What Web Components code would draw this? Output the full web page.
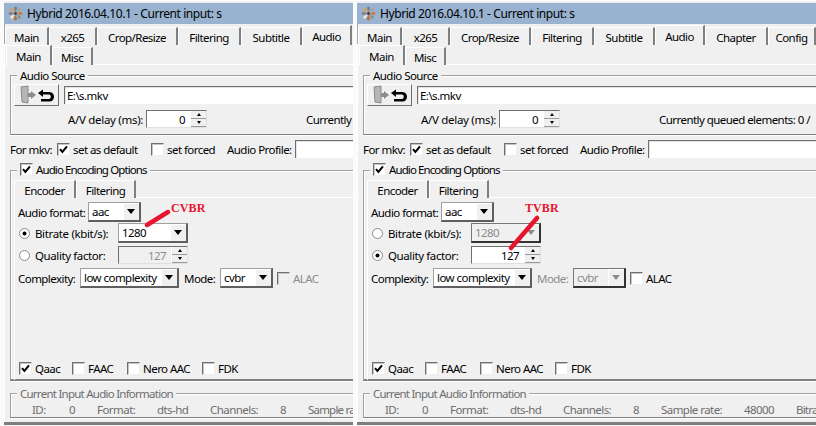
<!DOCTYPE html>
<html>
<head>
<meta charset="utf-8">
<title>Hybrid</title>
<style>
html,body{margin:0;padding:0;height:426px;overflow:hidden;background:#fbfbfb}
body{display:flex;gap:4px;padding-left:4px;position:relative;font:11.5px/15px "Noto Sans",sans-serif;letter-spacing:-.55px;color:#000}
</style>
</head>
<body>

<hy-window name="Hybrid 2016.04.10.1 - Current input: s" style="width:349px">
  <hy-tabs slot="tabs" style="padding-left:1px">
    <hy-tab style="width:44px">Main</hy-tab><hy-tab style="width:48px">x265</hy-tab><hy-tab style="width:81px">Crop/Resize</hy-tab><hy-tab style="width:63px">Filtering</hy-tab><hy-tab style="width:61px">Subtitle</hy-tab><hy-tab selected style="width:50px">Audio</hy-tab>
  </hy-tabs>
  <hy-audio-page mode="cvbr"></hy-audio-page>
</hy-window>

<hy-window name="Hybrid 2016.04.10.1 - Current input: s" style="width:459px">
  <hy-tabs slot="tabs" style="padding-left:1px">
    <hy-tab style="width:44px">Main</hy-tab><hy-tab style="width:48px">x265</hy-tab><hy-tab style="width:81px">Crop/Resize</hy-tab><hy-tab style="width:63px">Filtering</hy-tab><hy-tab style="width:61px">Subtitle</hy-tab><hy-tab selected style="width:50px">Audio</hy-tab><hy-tab style="width:63px">Chapter</hy-tab><hy-tab style="width:48px">Config</hy-tab>
  </hy-tabs>
  <hy-audio-page mode="tvbr"></hy-audio-page>
</hy-window>

<hy-note text="CVBR" tx="171" ty="201" x1="147" y1="225" x2="168" y2="212"></hy-note>
<hy-note text="TVBR" tx="525" ty="201" x1="511" y1="248" x2="537" y2="218"></hy-note>

<script>
// small helper, every widget is just a shadow root with some markup
function widget(tag, css, render){
  class W extends HTMLElement{
    constructor(){
      super();
      this.attachShadow({mode:'open'});
    }
    connectedCallback(){
      this.shadowRoot.innerHTML = '<style>' + css + '</style>' + render(this);
    }
  }
  customElements.define(tag, W);
}

const pinwheel = [0,45,90,135,180,225,270,315].map((a,i) =>
  `<path d="M7.5 6.5 6 2.2C6 .2 9 .2 9 2.2Z" fill="${['#7f7f7f','#a3a3a3','#d9752a','#8a8a8a','#c9681f','#efe9e0','#7f7f7f','#e39a45'][i]}" transform="rotate(${a} 7.5 7.5)"/>`
).join('') + '<circle cx="7.5" cy="7.5" r="1.4" fill="#4a4038"/>';

widget('hy-window', `
  :host{display:block;flex:none;height:426px;overflow:hidden;padding-top:3px;box-sizing:border-box;background:#f0f0f0;box-shadow:inset 0 1px #fff}
  .title{display:flex;align-items:center;height:21px;background:#98b2d0;padding-left:4px;gap:4px;font-size:12px;letter-spacing:-.42px}
  .title svg{flex:none}
  .body{width:800px;padding-top:1px;box-shadow:inset 1px 0 #a5a5a5}
`, el => `
  <div class="title">
    <svg width="15" height="15" viewBox="0 0 15 15">${pinwheel}</svg>
    <span>${el.getAttribute('name')}</span>
  </div>
  <div class="body"><slot name="tabs"></slot><slot></slot></div>
`);

widget('hy-tabs', `
  :host{display:flex;align-items:flex-end;height:20px;box-sizing:border-box;border-bottom:1px solid #fff}
  ::slotted(hy-tab){margin-bottom:-1px}
`, () => '<slot></slot>');

widget('hy-tab', `
  :host{display:flex;flex:none;align-items:center;justify-content:center;height:18px;box-sizing:border-box;background:#f0f0f0;
    border-top:1px solid #fff;border-left:1px solid #fff;border-right:2px solid #7f7f7f;padding-top:1px}
  :host([selected]){height:calc(100% + 1px);position:relative}
`, () => '<slot></slot>');

widget('hy-group', `
  :host{display:block;box-sizing:border-box;border:1px solid #a0a0a0;border-bottom-color:#808080;box-shadow:inset 1px 1px #fff,0 1px #fff}
  .legend{display:inline-flex;align-items:center;height:15px;margin:-8px 0 0 6px;padding:0 3px;background:#f0f0f0;vertical-align:top}
`, () => `<div style="height:0"><div class="legend"><slot name="legend"></slot></div></div><div><slot></slot></div>`);

widget('hy-row', `:host{display:flex;align-items:center;white-space:nowrap}`, () => '<slot></slot>');

widget('hy-check', `
  :host{display:inline-flex;align-items:center;flex:none;gap:3px}
  .box{width:13px;height:13px;box-sizing:border-box;background:#fff;border:1px solid;border-color:#6f6f6f #eee #eee #6f6f6f;box-shadow:inset 1px 1px #c4c4c4;display:block;flex:none}
  :host([disabled]) .box{background:#f0f0f0}
`, el => `
  <svg class="box" viewBox="0 0 11 11">${el.hasAttribute('checked') ? '<path d="M2 5.2 4.4 8 9 2.4" fill="none" stroke="#000" stroke-width="2"/>' : ''}</svg>
  <span><slot></slot></span>
`);

widget('hy-radio', `
  :host{display:inline-flex;align-items:center;flex:none;gap:5px}
  svg{flex:none;display:block}
`, el => `
  <svg width="11" height="11" viewBox="0 0 11 11">
    <circle cx="5.5" cy="5.5" r="5" fill="#fff" stroke="#8a8a8a"/>
    ${el.hasAttribute('checked') ? '<circle cx="5.5" cy="5.5" r="2" fill="#000"/>' : ''}
  </svg>
  <span><slot></slot></span>
`);

widget('hy-combo', `
  :host{display:flex;flex:none;box-sizing:border-box;height:20px;background:#fff;border:1px solid;border-color:#a0a0a0 #5f5f5f #5f5f5f #a0a0a0;border-width:1px 2px 2px 1px;align-items:center}
  :host([disabled]){background:#f0f0f0;color:#8c8c8c;border-color:#777 #333 #333 #777}
  .val{flex:1;padding-left:3px;overflow:hidden}
  .arrow{flex:none;width:16px;align-self:stretch;background:#f0f0f0;display:flex;align-items:center;justify-content:center;box-shadow:inset 1px 1px #fff}
  .arrow i{width:0;height:0;border:4px solid transparent;border-top:5px solid #000;border-bottom:0}
  :host([disabled]) .arrow i{border-top-color:#8c8c8c}
`, () => `<span class="val"><slot></slot></span><span class="arrow"><i></i></span>`);

widget('hy-spin', `
  :host{display:flex;flex:none;box-sizing:border-box;height:18px;background:#fff;border:1px solid;border-color:#6f6f6f #e0e0e0 #e0e0e0 #6f6f6f;align-items:center}
  :host([disabled]){background:#f0f0f0;color:#8c8c8c}
  .val{flex:1;text-align:right;padding-right:5px}
  .btn{flex:none;width:15px;align-self:stretch;display:flex;flex-direction:column;background:#f0f0f0;border-left:1px solid #fff}
  .btn span{flex:1;display:flex;align-items:center;justify-content:center;border-bottom:1px solid #9a9a9a}
  .btn i{width:0;height:0;border:2px solid transparent;border-bottom:3px solid #000;border-top:0}
  .btn span+span i{border-top:3px solid #000;border-bottom:0}
`, () => `<span class="val"><slot></slot></span><span class="btn"><span><i></i></span><span><i></i></span></span>`);

widget('hy-source-button', `
  :host{display:block;flex:none;width:45px;height:22px;box-sizing:border-box;background:#f0f0f0;border:1px solid;border-color:#fff #6f6f6f #6f6f6f #fff}
  svg{display:block}
`, () => `
  <svg width="43" height="20" viewBox="0 0 43 20">
    <path d="M6 2 13 1V18L7 17Z" fill="#b5b5b5" stroke="#8c8c8c"/>
    <path d="M13 8h3V6l5 4-5 4v-2h-3Z" fill="#8c8c8c"/>
    <path d="M28 4.5 23 8l5 4V9.6h6c2.4 0 2.4 4.4 0 4.4h-8v2.6h8.5c6 0 6-9.6 0-9.6H28V4Z" fill="#000"/>
  </svg>
`);

widget('hy-input', `
  :host{display:flex;align-items:center;box-sizing:border-box;height:18px;background:#fff;border-top:1px solid #6f6f6f;border-left:1px solid #6f6f6f;padding-left:2px;box-shadow:inset 1px 1px #e4e4e4}
`, () => '<slot></slot>');

widget('hy-audio-page', `
  :host{display:block;padding-left:1px;box-shadow:inset 1px 0 #fff}
  .off{color:#8c8c8c}
  .page{padding-left:5px}
  .info{height:25px;margin-top:12px;color:#6d6d6d}
  .frame{height:3px;margin-top:4px;background:#7f7f7f;margin-left:-1px}
  .panel{box-shadow:inset 1px 0 #fff;padding-top:4px;height:178px}
`, el => {
  const tv = el.getAttribute('mode') === 'tvbr';
  // the left window is narrower, it only shows the start of the long rows
  const rest = tv ? `<span style="width:83px">Sample rate:</span><span style="width:52px">48000</span><span style="letter-spacing:-.8px">Bitra</span>` : `<span style="letter-spacing:-.8px">Sample ra</span>`;
  return `
  <hy-tabs style="padding-left:1px">
    <hy-tab selected style="width:46px">Main</hy-tab><hy-tab style="width:41px">Misc</hy-tab>
  </hy-tabs>
  <div class="page">
    <hy-group style="height:60px;margin-top:10px">
      <span slot="legend">Audio Source</span>
      <hy-row style="height:22px;padding:8px 0 0 3px;gap:5px">
        <hy-source-button></hy-source-button>
        <hy-input style="flex:1">E:\\s.mkv</hy-input>
      </hy-row>
      <hy-row style="height:18px;margin-top:4px;padding-left:57px">
        <span style="width:78px;letter-spacing:-.3px">A/V delay (ms):</span>
        <hy-spin style="width:61px">0</hy-spin>
        <span style="margin-left:99px">${tv ? 'Currently queued elements: 0 /' : 'Currently'}</span>
      </hy-row>
    </hy-group>
    <hy-row style="height:18px;margin-top:5px">
      <span style="width:47px">For mkv:</span>
      <hy-check checked style="width:94px">set as default</hy-check>
      <hy-check style="width:76px">set forced</hy-check>
      <span style="width:68px">Audio Profile:</span>
      <hy-input style="width:505px"></hy-input>
    </hy-row>
    <hy-group style="height:211px;margin-top:12px;border-bottom-width:2px">
      <hy-check slot="legend" checked style="margin-top:-2px;letter-spacing:-.9px">Audio Encoding Options</hy-check>
      <div style="padding:9px 0 0 3px">
        <hy-tabs style="height:18px">
          <hy-tab selected style="width:62px">Encoder</hy-tab><hy-tab style="width:60px">Filtering</hy-tab>
        </hy-tabs>
        <div class="panel">
          <hy-row style="height:20px;padding-left:4px">
            <span style="width:70px">Audio format:</span>
            <hy-combo style="width:53px">aac</hy-combo>
          </hy-row>
          <hy-row style="height:20px;margin-top:1px;padding-left:5px">
            <hy-radio ${tv ? '' : 'checked'} style="width:99px;letter-spacing:-.35px">Bitrate (kbit/s):</hy-radio>
            <hy-combo ${tv ? 'disabled' : ''} style="width:70px;letter-spacing:-.55px">1280</hy-combo>
          </hy-row>
          <hy-row style="height:18px;margin-top:3px;padding-left:5px">
            <hy-radio ${tv ? 'checked' : ''} style="width:99px;letter-spacing:-.4px">Quality factor:</hy-radio>
            <hy-spin ${tv ? '' : 'disabled'} style="width:70px">127</hy-spin>
          </hy-row>
          <hy-row style="height:20px;margin-top:4px;padding-left:4px">
            <span style="width:62px">Complexity:</span>
            <hy-combo style="width:99px">low complexity</hy-combo>
            <span class="${tv ? 'off' : ''}" style="margin-left:5px;width:36px">Mode:</span>
            <hy-combo ${tv ? 'disabled' : ''} style="width:53px">cvbr</hy-combo>
            <hy-check ${tv ? '' : 'disabled'} style="margin-left:4px"><span class="${tv ? '' : 'off'}">ALAC</span></hy-check>
          </hy-row>
          <hy-row style="height:14px;margin-top:73px;padding-left:5px">
            <hy-check checked style="width:53px">Qaac</hy-check>
            <hy-check style="width:55px">FAAC</hy-check>
            <hy-check style="width:75px">Nero AAC</hy-check>
            <hy-check>FDK</hy-check>
          </hy-row>
        </div>
      </div>
    </hy-group>
    <hy-group class="info">
      <span slot="legend" style="letter-spacing:-.75px">Current Input Audio Information</span>
      <hy-row style="height:15px;margin-top:8px;padding-left:21px">
        <span style="width:37px">ID:</span><span style="width:28px">0</span>
        <span style="width:60px">Format:</span><span style="width:53px">dts-hd</span>
        <span style="width:70px">Channels:</span><span style="width:28px">8</span>
        ${rest}
      </hy-row>
    </hy-group>
  </div>
  <div class="frame"></div>
`;
});

widget('hy-note', `
  :host{display:block;position:absolute;left:0;top:0;width:816px;height:426px;pointer-events:none}
  svg{position:absolute;left:0;top:0}
  b{position:absolute;font:bold 12px/15px "Liberation Serif",serif;letter-spacing:.1px;color:#e8142d}
`, el => {
  const a = n => el.getAttribute(n);
  return `
  <svg width="816" height="426"><line x1="${a('x1')}" y1="${a('y1')}" x2="${a('x2')}" y2="${a('y2')}" stroke="#e8142d" stroke-width="4.5" stroke-linecap="round"/></svg>
  <b style="left:${a('tx')}px;top:${a('ty')}px">${a('text')}</b>
`;
});
</script>
</body>
</html>
